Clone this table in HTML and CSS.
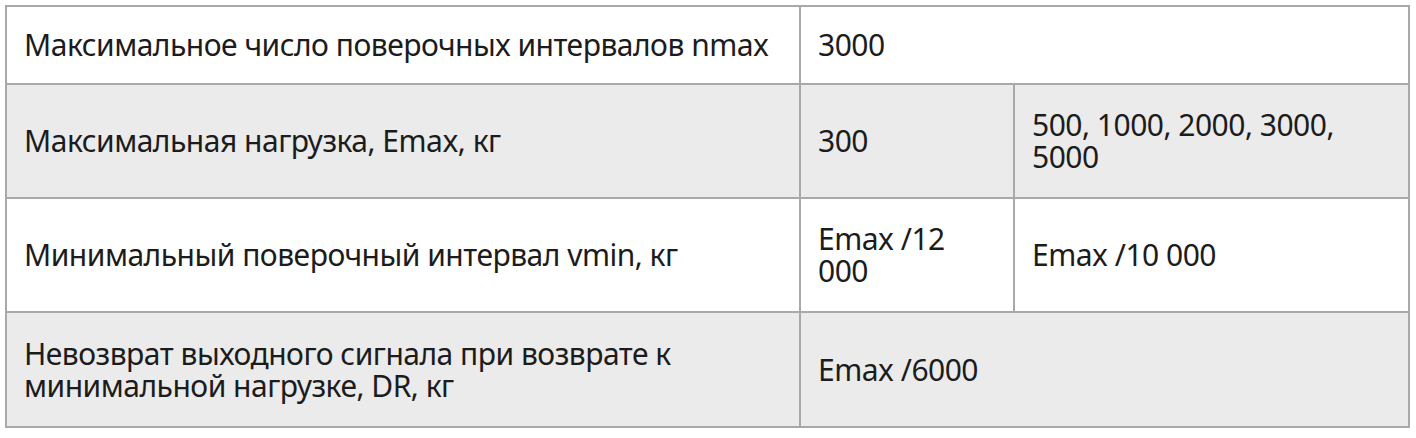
FILE: index.html
```html
<!DOCTYPE html>
<html lang="ru">
<head>
<meta charset="utf-8">
<link rel="stylesheet" href="styles.css">
</head>
<body>
<table class="spec">
  <colgroup>
    <col class="c1"><col class="c2"><col class="c3">
  </colgroup>
  <tr class="r1">
    <td>Максимальное число поверочных интервалов nmax</td>
    <td colspan="2">3000</td>
  </tr>
  <tr class="alt">
    <td>Максимальная нагрузка, Emax, кг</td>
    <td>300</td>
    <td>500, 1000, 2000, 3000, 5000</td>
  </tr>
  <tr>
    <td>Минимальный поверочный интервал vmin, кг</td>
    <td>Emax /12 000</td>
    <td>Emax /10 000</td>
  </tr>
  <tr class="alt last">
    <td>Невозврат выходного сигнала при возврате к минимальной нагрузке, DR, кг</td>
    <td colspan="2">Emax /6000</td>
  </tr>
</table>
</body>
</html>
```

FILE: styles.css
```css
html, body {
  margin: 0;
  padding: 0;
  background: #ffffff;
}
body {
  padding: 5px 0 0 5px;
  font-family: "Noto Sans", "Open Sans", sans-serif;
  color: #1c1c1c;
}
.spec {
  border-collapse: separate;
  border-spacing: 0;
  table-layout: fixed;
  width: 1405px;
  border-top: 2px solid #a9a9a9;
  border-left: 2px solid #a9a9a9;
}
.c1 { width: 794px; }
.c2 { width: 214px; }
.c3 { width: 395px; }
.spec td {
  box-sizing: border-box;
  border-right: 2px solid #a9a9a9;
  border-bottom: 2px solid #a9a9a9;
  padding: 0 16px 0 17px;
  height: 114px;
  vertical-align: middle;
  font-size: 30px;
  letter-spacing: -0.5px;
  line-height: 32px;
}
.spec .r1 td { height: 78px; }
.spec .last td { height: 115px; }
.alt td { background: #ebebeb; }
```
